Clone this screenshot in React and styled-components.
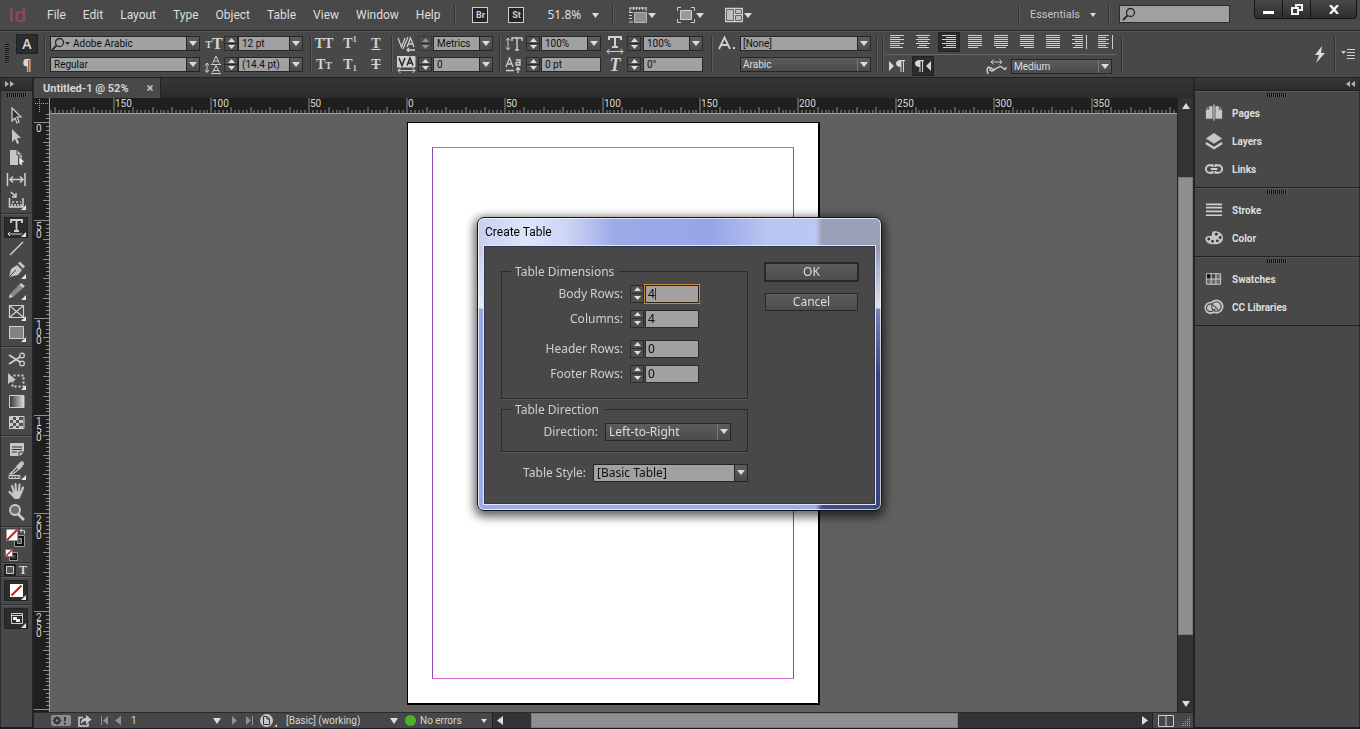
import React, { useState } from 'react';
import styled, { createGlobalStyle, css } from 'styled-components';

const GlobalStyle = createGlobalStyle`
    * {
        box-sizing: border-box;
    }
    body {
        margin: 0;
        background-color: #474747;
        color: #d6d6d6;
        font-family: Roboto, "Liberation Sans", sans-serif;
        font-size: 10px;
        overflow: hidden;
    }
    button, input, select {
        font: inherit;
        color: inherit;
        margin: 0;
        padding: 0;
        border: 0;
        border-radius: 0;
        background: none;
        outline: none;
    }
    svg {
        display: block;
        flex: none;
    }
`;

/* ---------- shared parts ---------- */

const Shell = styled.div`
    display: flex;
    flex-direction: column;
    height: 100vh;
    border-bottom: 2px solid #1d1c28;
`;

const Divider = styled.span`
    flex: none;
    width: 2px;
    height: ${({ $h }) => $h || 36}px;
    border-left: 1px solid #333;
    border-right: 1px solid #5c5c5c;
`;

const Spacer = styled.span`
    flex: 1;
`;

const darkButton = css`
    background-color: #2c2c2c;
    box-shadow: inset 0 0 0 1px #222;
`;

const Svg = ({ w = 18, h = 18, children, ...rest }) => (
    <svg width={w} height={h} viewBox={`0 0 ${w} ${h}`} fill="none" stroke="#cfcfcf" {...rest}>
        {children}
    </svg>
);

const Down = ({ w = 8, h = 5, fill = '#dcdcdc' }) => (
    <Svg w={w} h={h} stroke="none"><path d={`M0 0H${w}L${w / 2} ${h}Z`} fill={fill} /></Svg>
);

const Up = ({ w = 8, h = 5, fill = '#dcdcdc' }) => (
    <Svg w={w} h={h} stroke="none"><path d={`M0 ${h}H${w}L${w / 2} 0Z`} fill={fill} /></Svg>
);

const Side = ({ left, fill = '#dcdcdc', w = 6, h = 9 }) => (
    <Svg w={w} h={h} stroke="none">
        <path d={left ? `M${w} 0V${h}L0 ${h / 2}Z` : `M0 0V${h}L${w} ${h / 2}Z`} fill={fill} />
    </Svg>
);

const Corner = () => <path d="M20 15V20H15Z" fill="#e4e4e4" stroke="none" />;

/* ---------- menu bar ---------- */

const MenuBar = styled.header`
    display: flex;
    align-items: center;
    height: 31px;
    flex: none;
    background-color: #494949;
    border-bottom: 1px solid #252525;
`;

const Logo = styled.span`
    width: 38px;
    padding-left: 8px;
    color: #96406c;
    font: 600 20px/28px "Open Sans", sans-serif;
`;

const MenuNav = styled.nav`
    display: flex;
    gap: 17px;
    padding: 0 14px 0 9px;
`;

const MenuItem = styled.button`
    font-size: 12px;
    line-height: 16px;
    color: #dedede;
`;

const AppBadge = styled.button`
    width: 16px;
    height: 16px;
    margin-left: ${({ $gap }) => $gap}px;
    border: 1px solid #cfcfcf;
    background-color: #262626;
    color: #cfcfcf;
    font-size: 9px;
    line-height: 14px;
    font-weight: 700;
`;

const ZoomLevel = styled.button`
    display: flex;
    align-items: center;
    gap: 11px;
    margin: 0 13px 0 23px;
    font: 12px/16px "Noto Sans", sans-serif;
    color: #dedede;
`;

const ViewMenus = styled.div`
    display: flex;
    gap: 21px;
    padding-left: 15px;
`;

const ViewButton = styled.button`
    display: flex;
    align-items: center;
    gap: 1px;
`;

const WorkspaceButton = styled.button`
    display: flex;
    align-items: center;
    gap: 10px;
    padding: 0 12px 0 10px;
    font-size: 11px;
    line-height: 16px;
    color: #c4c4c4;
`;

const SearchBox = styled.label`
    display: flex;
    align-items: center;
    width: 111px;
    height: 18px;
    margin: 0 24px 3px 9px;
    padding-left: 2px;
    border: 1px solid #2b2b2b;
    background-color: #a0a0a0;

    input {
        min-width: 0;
        width: 90px;
        color: #111;
    }
`;

const WindowButtons = styled.div`
    display: flex;
    align-self: flex-start;
    height: 19px;
    margin-right: 3px;
    border: 1px solid #161616;
    border-top: 0;
    border-radius: 0 0 4px 4px;
    background: linear-gradient(#484848, #2e2e2e);
`;

const WindowButton = styled.button`
    display: flex;
    align-items: center;
    justify-content: center;
    width: ${({ $w }) => $w}px;

    &:not(:first-child) {
        border-left: 1px solid #161616;
    }
`;

const Lens = ({ dark = '#2b2b2b' }) => (
    <Svg w={14} h={14} stroke={dark}>
        <circle cx="8.5" cy="5.5" r="4" strokeWidth="1.3" />
        <path d="M5.5 8.5L1 13" strokeWidth="1.8" />
    </Svg>
);

const menus = ['File', 'Edit', 'Layout', 'Type', 'Object', 'Table', 'View', 'Window', 'Help'];

const TopMenu = () => (
    <MenuBar>
        <Logo>Id</Logo>
        <MenuNav>
            {menus.map(name => <MenuItem key={name}>{name}</MenuItem>)}
        </MenuNav>
        <Divider $h={21} />
        <AppBadge $gap={16}>Br</AppBadge>
        <AppBadge $gap={20}>St</AppBadge>
        <ZoomLevel>51.8% <Down w={7} /></ZoomLevel>
        <Divider $h={21} />
        <ViewMenus>
            <ViewButton aria-label="View options">
                <Svg w={18} h={16}>
                    <path d="M1 .5V5M4.5 0V3M7.5 0V3M10.5 0V3M13.5 0V3M17 0V4M0 5.5H4M0 8.5H3M0 11.5H3M0 15H4M0 1H18" />
                    <path d="M5.500 5.500H17.500V15.500H5.500Z" fill="#8f8f8f" stroke="#b5b5b5" />
                </Svg>
                <Down />
            </ViewButton>
            <ViewButton aria-label="Screen mode">
                <Svg w={18} h={16}>
                    <path d="M.5 4V.5H4M14 .5H17.500V4M17.500 12V15.500H14M4 15.500H.5V12" />
                    <path d="M3.500 3.500H14.500V12.500H3.500Z" fill="#999" />
                </Svg>
                <Down />
            </ViewButton>
            <ViewButton aria-label="Arrange documents">
                <Svg w={18} h={16}>
                    <path d="M.5 1.500H17.500V14.500H.5ZM9.500 1V15M9.500 7.500H18" strokeWidth="1.400" />
                    <path d="M2 3H8V13H2ZM11 3H16V6H11ZM11 9H16V13H11Z" fill="#bdbdbd" stroke="none" />
                </Svg>
                <Down />
            </ViewButton>
        </ViewMenus>
        <Spacer />
        <Divider $h={21} />
        <WorkspaceButton>Essentials <Down w={6} h={4} /></WorkspaceButton>
        <Divider $h={21} />
        <SearchBox><Lens /><input aria-label="Search" /></SearchBox>
        <WindowButtons>
            <WindowButton $w={27} aria-label="Minimize">
                <Svg w={11} h={12} stroke="none"><path d="M0 8H11V11H0Z" fill="#fff" /></Svg>
            </WindowButton>
            <WindowButton $w={28} aria-label="Restore">
                <Svg w={12} h={11} stroke="#f2f2f2" strokeWidth="2">
                    <path d="M5 1H11V6H5Z" />
                    <path d="M1 4H7V10H1Z" fill="#3a3a3a" />
                </Svg>
            </WindowButton>
            <WindowButton $w={46} aria-label="Close">
                <Svg w={10} h={9} stroke="#f5f5f5" strokeWidth="2.400"><path d="M1 0L9 9M9 0L1 9" /></Svg>
            </WindowButton>
        </WindowButtons>
    </MenuBar>
);

/* ---------- control bar ---------- */

const ControlBar = styled.div`
    display: flex;
    align-items: center;
    height: 47px;
    flex: none;
    padding-bottom: 1px;
    background-color: #484848;
    border-top: 1px solid #585858;
    border-bottom: 1px solid #222;
`;

const Grip = styled.span`
    flex: none;
    width: 4px;
    height: 20px;
    background: repeating-linear-gradient(#0c0c0c 0 1px, #5a5a5a 1px 2px);
`;

const Column = styled.div`
    display: flex;
    flex-direction: column;
    gap: 6px;
    padding: 0 ${({ $right = 0 }) => $right}px 0 ${({ $left = 0 }) => $left}px;
`;

const Row = styled.div`
    display: flex;
    align-items: center;
    height: 15px;
    gap: ${({ $gap = 1 }) => $gap}px;
`;

const ModeButton = styled.button`
    display: flex;
    align-items: center;
    justify-content: center;
    width: 22px;
    height: 20px;
    margin: -3px 0;
    color: #d8d8d8;
    font: 600 14px/18px "Open Sans", sans-serif;
    ${({ $active }) => $active && darkButton}
`;

const Combo = styled.div`
    display: flex;
    align-items: center;
    width: ${({ $w }) => $w}px;
    height: 15px;
    border: 1px solid #262626;
    background-color: #a1a1a1;
    color: #101010;

    input {
        flex: 1;
        min-width: 0;
        height: 13px;
        padding-left: 3px;
    }
`;

const ComboArrow = styled.button`
    display: flex;
    align-items: center;
    justify-content: center;
    width: 13px;
    align-self: stretch;
    border-left: 1px solid #262626;
    background: linear-gradient(#5e5e5e, #4a4a4a);
`;

const SpinBox = styled.span`
    flex: none;
    display: flex;
    flex-direction: column;
    width: 14px;
    height: ${({ $h }) => $h}px;
    border: 1px solid #2b2b2b;
    background-color: #4f4f4f;
    opacity: ${({ $dim }) => ($dim ? 0.5 : 1)};

    button {
        flex: 1;
        display: flex;
        align-items: center;
        justify-content: center;
    }
    button + button {
        border-top: 1px solid #2b2b2b;
    }
`;

const Spinner = ({ h = 15, dim, onStep }) => (
    <SpinBox $h={h} $dim={dim}>
        <button type="button" aria-label="Increase" onClick={() => onStep && onStep(1)}><Up w={7} h={4} /></button>
        <button type="button" aria-label="Decrease" onClick={() => onStep && onStep(-1)}><Down w={7} h={4} /></button>
    </SpinBox>
);

const SelectWrap = styled.div`
    position: relative;
    display: flex;
    width: ${({ $w }) => $w}px;
    height: ${({ $h = 15 }) => $h}px;
    border: 1px solid #262626;
    background: ${({ $light }) => ($light ? '#a1a1a1' : 'linear-gradient(#5c5c5c, #4b4b4b)')};
    color: ${({ $light }) => ($light ? '#101010' : '#dcdcdc')};

    select {
        flex: 1;
        appearance: none;
        padding: 0 16px 0 ${({ $h }) => ($h ? 3 : 2)}px;
    }
`;

const SelectArrow = styled.span`
    position: absolute;
    top: 0;
    right: 0;
    bottom: 0;
    display: flex;
    align-items: center;
    justify-content: center;
    width: 13px;
    pointer-events: none;
    border-left: 1px solid ${({ $light }) => ($light ? '#262626' : '#777')};
    background: ${({ $light }) => ($light ? 'linear-gradient(#5e5e5e, #4a4a4a)' : 'none')};
`;

const Select = ({ w, h, light, value, id, label }) => (
    <SelectWrap $w={w} $h={h} $light={light}>
        <select id={id} aria-label={label} defaultValue={value}><option>{value}</option></select>
        <SelectArrow $light={light}><Down /></SelectArrow>
    </SelectWrap>
);

const Field = ({ w, value, label, arrow = true, icon }) => (
    <Combo $w={w}>
        {icon}
        <input aria-label={label} defaultValue={value} />
        {arrow && <ComboArrow aria-label={`${label} list`}><Down /></ComboArrow>}
    </Combo>
);

const Glyph = styled.button`
    display: flex;
    align-items: center;
    justify-content: center;
    width: 20px;
    height: 16px;
    color: #d2d2d2;
    font: ${({ $size = 14 }) => $size}px/16px "Liberation Serif", serif;
    font-weight: 700;
    font-style: ${({ $italic }) => ($italic ? 'italic' : 'normal')};
    text-decoration: ${({ $line }) => $line || 'none'};

    sup, sub {
        font-size: 8px;
        line-height: 8px;
    }
    sup {
        align-self: flex-start;
    }
    sub {
        align-self: flex-end;
    }
    small {
        font-size: 10px;
        padding-top: 3px;
    }
`;

const AlignPanel = styled.div`
    padding: 0 5px 0 2px;
`;

const AlignRow = styled.div`
    display: flex;
    align-items: center;
    height: 20px;
    gap: 4px;

    & + & {
        margin-top: 2px;
        padding-top: 1px;
        height: 22px;
        border-top: 1px solid #666;
    }
`;

const AlignButton = styled.button`
    display: flex;
    align-items: center;
    justify-content: center;
    width: 22px;
    height: 20px;
    ${({ $active }) => $active && darkButton}
`;

const aligns = [
    { name: 'Align left', lines: [[0, 14], [0, 10], [0, 14], [0, 10], [0, 14], [0, 10], [0, 13]] },
    { name: 'Align center', lines: [[0, 14], [2, 12], [0, 14], [2, 12], [0, 14], [3, 11], [1, 13]] },
    { name: 'Align right', lines: [[0, 14], [4, 14], [0, 14], [4, 14], [0, 14], [4, 14], [1, 14]], active: true },
    { name: 'Justify left', lines: [[0, 14], [0, 14], [0, 14], [0, 14], [0, 14], [0, 14], [0, 10]] },
    { name: 'Justify center', lines: [[0, 14], [0, 14], [0, 14], [0, 14], [0, 14], [0, 14], [2, 12]] },
    { name: 'Justify right', lines: [[0, 14], [0, 14], [0, 14], [0, 14], [0, 14], [0, 14], [4, 14]] },
    { name: 'Justify all', lines: [[0, 14], [0, 14], [0, 14], [0, 14], [0, 14], [0, 14], [0, 14]] },
    { name: 'Align towards spine', lines: [[0, 11], [3, 11], [0, 11], [3, 11], [0, 11], [3, 11], [1, 11]], bar: true },
    { name: 'Align away from spine', lines: [[0, 11], [0, 8], [0, 11], [0, 8], [0, 11], [0, 8], [0, 10]], bar: true },
];

const AlignIcon = ({ lines, bar }) => (
    <Svg w={15} h={14}>
        {lines.map(([from, to], i) => <path key={i} d={`M${from} ${i * 2 + 0.5}H${to}`} />)}
        {bar && <path d="M14.500 0V14" />}
    </Svg>
);

const Pilcrow = ({ flip }) => (
    <Svg w={18} h={12} stroke="none" fill="#d6d6d6">
        <path d={flip ? 'M17 1V11L12 6Z' : 'M1 1V11L6 6Z'} />
        <path
            transform={flip ? 'translate(-7 0)' : undefined}
            d="M17 0V1.200H16V12H15V1.200H13.500V12H12.500V7C10 7 8 5.800 8 3.500S10 0 12.500 0Z"
        />
    </Svg>
);

const ControlStrip = () => (
    <ControlBar>
        <Column $left={5} $right={7}><Grip /></Column>
        <Column>
            <Row><ModeButton $active aria-label="Character">A</ModeButton></Row>
            <Row><ModeButton aria-label="Paragraph">¶</ModeButton></Row>
        </Column>
        <Column $left={6}><Divider /></Column>
        <Column $left={4} $right={4}>
            <Field
                w={150}
                value="Adobe Arabic"
                label="Font"
                icon={<><Lens /><Down w={5} h={3} fill="#2b2b2b" /></>}
            />
            <Field w={150} value="Regular" label="Font style" />
        </Column>
        <Column $right={7}>
            <Row $gap={0}>
                <Glyph as="span" $size={16}><small>T</small>T</Glyph>
                <Spinner /><Field w={65} value="12 pt" label="Font size" />
            </Row>
            <Row $gap={0}>
                <Svg w={20} h={20}>
                    <path d="M3 8V17M1 10.500L3 8L5 10.500M1 15L3 17.500L5 15M7 9.500H17M7 18.500H17" />
                    <path d="M8.500 8.500L12 1L15.500 8.500M10 6H14M8.500 17.500L12 10.500L15.500 17.500M10 15.500H14" />
                </Svg>
                <Spinner /><Field w={65} value="(14.4 pt)" label="Leading" />
            </Row>
        </Column>
        <Divider />
        <Column $left={2} $right={5}>
            <Row $gap={6}>
                <Glyph>TT</Glyph>
                <Glyph>T<sup>1</sup></Glyph>
                <Glyph $line="underline">T</Glyph>
            </Row>
            <Row $gap={6}>
                <Glyph>T<small>T</small></Glyph>
                <Glyph>T<sub>1</sub></Glyph>
                <Glyph $line="line-through">T</Glyph>
            </Row>
        </Column>
        <Divider />
        <Column $left={4} $right={6}>
            <Row>
                <Svg w={20} h={16} strokeWidth="1.300">
                    <path d="M1 2L4.500 11L8 2M10 11L13.500 2L17 11M11 8H16M11 1L6 13M18 14H10M12 12L10 14L12 16" />
                </Svg>
                <Spinner dim /><Field w={60} value="Metrics" label="Kerning" />
            </Row>
            <Row>
                <Svg w={20} h={18}>
                    <path d="M0 .5H18V11H0Z" fill="#cfcfcf" />
                    <path d="M2 2L5 9.500L8 2M10 9.500L13 2L16 9.500M11 7H15" stroke="#222" strokeWidth="1.400" />
                    <path d="M1 14.500H18M3.500 12L1 14.500L3.500 17M15.500 12L18 14.500L15.500 17" />
                </Svg>
                <Spinner /><Field w={60} value="0" label="Tracking" />
            </Row>
        </Column>
        <Divider />
        <Column $left={4} $right={4}>
            <Row>
                <Svg w={20} h={16}>
                    <path d="M3 2V14M1 4.500L3 2L5 4.500M1 11.500L3 14L5 11.500" />
                    <path d="M7 5V2H17V5M12 2V14M10 14H14" strokeWidth="1.400" />
                </Svg>
                <Spinner /><Field w={60} value="100%" label="Vertical scale" />
            </Row>
            <Row>
                <Svg w={20} h={16} strokeWidth="1.300">
                    <path d="M1 10L4.500 1L8 10M2 7H7M1 13.500H9M11 3H15V8H11V5.500H15M13 10.500V16M11 13L13 10.500L15 13" />
                </Svg>
                <Spinner /><Field w={60} value="0 pt" label="Baseline shift" arrow={false} />
            </Row>
        </Column>
        <Column $right={8}>
            <Row $gap={2}>
                <Svg w={20} h={20}>
                    <path d="M4 6V3H16V6M10 3V13M7 13H13" strokeWidth="2" />
                    <path d="M2 17.500H18M4.500 15L2 17.500L4.500 20M15.500 15L18 17.500L15.500 20" />
                </Svg>
                <Spinner /><Field w={60} value="100%" label="Horizontal scale" />
            </Row>
            <Row $gap={2}>
                <Glyph as="span" $size={18} $italic>T</Glyph>
                <Spinner /><Field w={60} value="0°" label="Skew" arrow={false} />
            </Row>
        </Column>
        <Divider />
        <Column $left={4} $right={5}>
            <Row $gap={3}>
                <Svg w={20} h={15} strokeWidth="1.800">
                    <path d="M2 13L7.500 1.500L13 13M4 9H11" />
                    <path d="M16 11H18V13H16Z" fill="#cfcfcf" stroke="none" />
                </Svg>
                <Select w={131} light value="[None]" label="Character style" />
            </Row>
            <Row $gap={3}>
                <Svg w={20} h={15} />
                <Select w={131} value="Arabic" label="Language" />
            </Row>
        </Column>
        <Divider /><Column $left={4}><Divider /></Column>
        <AlignPanel>
            <AlignRow>
                {aligns.map(item => (
                    <AlignButton key={item.name} aria-label={item.name} $active={item.active}>
                        <AlignIcon {...item} />
                    </AlignButton>
                ))}
            </AlignRow>
            <AlignRow>
                <AlignButton aria-label="Left to right"><Pilcrow /></AlignButton>
                <AlignButton aria-label="Right to left" $active><Pilcrow flip /></AlignButton>
                <Svg w={69} h={16} viewBox="-47 0 69 16" strokeWidth="1.500">
                    <path d="M3 16C1 10 3 8 6 10S9 12 12 10S16 8 18 10S21 12 21 9M6 10C3 13 8 14 10 11" />
                    <path d="M6 4H17M8.500 1.500L6 4L8.500 6.500M14.500 1.500L17 4L14.500 6.500" strokeWidth="1" />
                </Svg>
                <Select w={101} value="Medium" label="Kashida width" />
            </AlignRow>
        </AlignPanel>
        <Divider />
        <Spacer />
        <Column $right={3}>
            <ModeButton aria-label="Quick apply">
                <Svg w={12} h={17} stroke="none"><path d="M8 0L1 9L5 9L2 17L11 7L7 7Z" fill="#dcdcdc" /></Svg>
            </ModeButton>
        </Column>
        <Divider />
        <Column $left={5} $right={4}>
            <Svg w={15} h={10}>
                <path d="M6 .5H14M6 3.500H14M6 6.500H14M6 9.500H14" />
                <path d="M0 2H5L2.500 5Z" fill="#cfcfcf" stroke="none" />
            </Svg>
        </Column>
    </ControlBar>
);

/* ---------- tools ---------- */

const Workspace = styled.div`
    display: flex;
    flex: 1;
    min-height: 0;
`;

const ToolDock = styled.aside`
    flex: none;
    width: 34px;
    border-left: 1px solid #2a2a2a;
    border-right: 2px solid #242424;
    background-color: #484848;
`;

const DockHeader = styled.div`
    display: flex;
    align-items: center;
    justify-content: ${({ $end }) => ($end ? 'flex-end' : 'flex-start')};
    gap: 1px;
    height: 13px;
    padding: 0 4px;
    background: linear-gradient(#383838, #2c2c2c);
    border-bottom: 1px solid #222;
`;

const DockGrip = styled.div`
    width: 20px;
    height: 4px;
    margin: 2px auto ${({ $after }) => $after}px;
    background: repeating-linear-gradient(90deg, #0c0c0c 0 1px, #5a5a5a 1px 2px);
`;

const ToolGroup = styled.div`
    display: flex;
    flex-direction: column;
    align-items: center;
    margin-right: 1px;
    padding: ${({ $pad = 2 }) => $pad}px 0;
    border-top: 1px solid ${({ $first }) => ($first ? 'transparent' : '#2e2e2e')};
    box-shadow: ${({ $first }) => ($first ? 'none' : 'inset 0 1px #5c5c5c')};
`;

const Tool = styled.button`
    display: flex;
    align-items: center;
    justify-content: center;
    width: 24px;
    height: 21px;
    ${({ $active }) => $active && darkButton}
`;

const MiniRow = styled.div`
    display: flex;
    align-items: center;
    gap: 3px;
    width: 24px;
    height: ${({ $h }) => $h}px;
    font: 700 12px/12px "Liberation Serif", serif;
`;

const light = { fill: '#c6c6c6', stroke: 'none' };

const toolGroups = [
    [
        { name: 'Selection', icon: <path d="M6 2L15 11H11L13 16L11 17L9 12L6 15Z" fill="#333" strokeWidth="1.200" /> },
        { name: 'Direct selection', icon: <path d="M6 2L15 11H11L13 16L11 17L9 12L6 15Z" {...light} /> },
        { name: 'Page', icon: <><path d="M4 2H11L16 7V10L12 8V17H4Z" {...light} /><path d="M11 2V7H16" stroke="#444" /><path d="M13 8L19 14.500H16L17 18L13 16Z" fill="#eee" stroke="#444" strokeWidth=".7" /></> },
        { name: 'Gap', icon: <path d="M1.500 4V17M19 4V17M4 10.500H17M7 7.500L4 10.500L7 13.500M14 7.500L17 10.500L14 13.500" strokeWidth="1.500" /> },
        { name: 'Content collector', corner: true, icon: <path d="M3.500 8V17H17V8M6 17V14M9 17V14M12 17V14M15 17V14M6 12H8M10 12H12M14 12H15M5 2L10 7M10 3V7H6" strokeWidth="1.500" /> },
    ],
    [
        { name: 'Type', active: true, corner: true, icon: <><path d="M5 6V3H16V6M10.500 3V14M8 14H13" strokeWidth="1.800" /><path d="M2 17H16M4 15L2 17L4 19" /></> },
        { name: 'Line', icon: <path d="M4 17L17 4" strokeWidth="1.400" /> },
        { name: 'Pen', corner: true, icon: <><path d="M3 18L5 10L11 6L16 11L12 16Z" {...light} /><path d="M12 4.500L14 2.500L19 7.500L17 9.500Z" {...light} /><path d="M3 18L10 11" stroke="#444" /></> },
        { name: 'Pencil', corner: true, icon: <><path d="M3 18L4 14L13 5L17 8L7 17Z" fill="#8b8b8b" stroke="none" /><path d="M3 18L4 14L7 17ZM13 5L15 3L19 6L17 8Z" {...light} /></> },
        { name: 'Rectangle frame', corner: true, icon: <path d="M3.500 4.500H17.500V16.500H3.500ZM4 5L17 16M17 5L4 16" strokeWidth="1.200" /> },
        { name: 'Rectangle', corner: true, icon: <path d="M3.500 4.500H17.500V16.500H3.500Z" fill="#838383" /> },
    ],
    [
        { name: 'Scissors', icon: <><path d="M3 6L14 13M3 15L14 8" strokeWidth="1.800" /><circle cx="16" cy="6.500" r="2.300" strokeWidth="1.300" /><circle cx="16" cy="14.500" r="2.300" strokeWidth="1.300" /></> },
        { name: 'Free transform', corner: true, icon: <><path d="M7.500 5.500H17.500V16.500H6.500V10" strokeDasharray="2 2" strokeWidth="2" /><path d="M2 3L10 10L6 11L2 14Z" {...light} /></> },
        { name: 'Gradient swatch', icon: <><defs><linearGradient id="toolGrad"><stop stopColor="#333" /><stop offset="1" stopColor="#ddd" /></linearGradient></defs><path d="M3.500 4.500H18V16.500H3.500Z" fill="url(#toolGrad)" /></> },
        { name: 'Gradient feather', icon: <><path d="M3.500 4.500H18V16.500H3.500Z" fill="#555" /><path d="M4 5H7V8H4ZM10 5H13V8H10ZM7 8H10V11H7ZM13 8H17V11H13ZM4 11H7V14H4ZM10 11H13V14H10ZM7 14H10V16H7ZM13 14H17V16H13Z" fill="#c9c9c9" stroke="none" /></> },
    ],
    [
        { name: 'Note', icon: <><path d="M4 4H18V13L14 17H4Z" {...light} /><path d="M6 8H16M6 10.500H16M6 13H11M13 17V13H18" stroke="#333" /></> },
        { name: 'Eyedropper', corner: true, icon: <><path d="M4 14L11 7L13 9L7 14Z" strokeWidth="1.200" /><path d="M10 6L12 4.500L14 2L17 1L18 4L16 7L14 9.500Z" {...light} /><path d="M3 15.500H14V18.500H3ZM6 15V18M9 15V18M12 15V18" /></> },
        {
            name: 'Hand',
            icon: (
                <>
                    <path d="M6 5L8 11M9.500 3L10 10M13.500 3.500L13 10M17 6.500L15 12M3.500 11L7.500 15" stroke="#c6c6c6" strokeWidth="2.200" strokeLinecap="round" />
                    <path d="M7 10H16L15 15L13 18H8.500L5.500 14Z" {...light} />
                </>
            ),
        },
        { name: 'Zoom', icon: <><path d="M12 12L18 18" strokeWidth="2.500" /><circle cx="9" cy="8" r="5" fill="#6f6f6f" strokeWidth="1.800" /></> },
    ],
];

const groupPads = [2, 3, 2, 3];

const Tools = () => (
    <ToolDock>
        <DockHeader><Side w={4} h={6} fill="#b5b5b5" /><Side w={4} h={6} fill="#b5b5b5" /></DockHeader>
        <DockGrip $after={6} />
        {toolGroups.map((group, i) => (
            <ToolGroup key={i} $first={i === 0} $pad={groupPads[i]}>
                {group.map(tool => (
                    <Tool key={tool.name} aria-label={tool.name} $active={tool.active}>
                        <Svg w={21} h={21}>{tool.icon}{tool.corner && <Corner />}</Svg>
                    </Tool>
                ))}
            </ToolGroup>
        ))}
        <ToolGroup $pad={1}>
            <MiniRow $h={20}>
                <Svg w={24} h={20}>
                    <path d="M12.500 9.500H18.500V16.500H12.500Z" stroke="#111" strokeWidth="3" />
                    <path d="M10.500 7.500H20.500V18.500H10.500Z" stroke="#999" />
                    <path d="M13.500 10.500H17.500V15.500H13.500Z" fill="#555" stroke="#999" />
                    <path d="M2 1H14V13H2Z" fill="#fff" stroke="#444" />
                    <path d="M3 12L13 2" stroke="#d01818" strokeWidth="2" />
                    <path d="M16 2.500H20.500V6M18 .5L16 2.500L18 4.500" />
                </Svg>
            </MiniRow>
            <MiniRow $h={13}>
                <Svg w={16} h={12}>
                    <path d="M6.500 4.500H12.500V10.500H6.500Z" stroke="#111" strokeWidth="2" />
                    <path d="M5.500 3.500H13.500V11.500H5.500Z" stroke="#999" />
                    <path d="M1.500 .5H8.500V7.500H1.500Z" fill="#fff" stroke="#777" />
                    <path d="M2 7L8 1" stroke="#d01818" strokeWidth="1.500" />
                </Svg>
            </MiniRow>
        </ToolGroup>
        <ToolGroup $pad={0}>
            <MiniRow $h={13}>
                <Svg w={12} h={12}><rect width="12" height="12" fill="#222" stroke="none" /><path d="M2.500 2.500H9.500V9.500H2.500Z" fill="#555" /></Svg>
                <span>T</span>
            </MiniRow>
        </ToolGroup>
        <ToolGroup $pad={3}>
            <Tool $active aria-label="Apply none">
                <Svg w={21} h={21}>
                    <path d="M4 4H17V17H4Z" fill="#fff" stroke="none" />
                    <path d="M5.500 15.500L15.500 5.500" stroke="#d01818" strokeWidth="2" />
                    <Corner />
                </Svg>
            </Tool>
        </ToolGroup>
        <ToolGroup $pad={3}>
            <Tool $active aria-label="View mode">
                <Svg w={21} h={21}>
                    <path d="M5.500 5.500H16.500V15.500H5.500ZM5 7.500H17" />
                    <path d="M7 9H11V11H14V14H10V12H7Z" fill="#eee" stroke="none" />
                    <Corner />
                </Svg>
            </Tool>
        </ToolGroup>
    </ToolDock>
);

/* ---------- document ---------- */

const DocArea = styled.main`
    display: flex;
    flex-direction: column;
    flex: 1;
    min-width: 0;
`;

const TabBar = styled.div`
    display: flex;
    flex: none;
    height: 20px;
    background: linear-gradient(#363636, #2c2c2c);
`;

const Tab = styled.button`
    display: flex;
    align-items: center;
    gap: 18px;
    padding: 0 7px 0 9px;
    border-right: 1px solid #222;
    background-color: #494949;
    font-size: 11px;
    font-weight: 700;
`;

const DocGrid = styled.div`
    display: grid;
    grid-template: 16px minmax(0, 1fr) / 16px minmax(0, 1fr) 16px;
    flex: 1;
    min-height: 0;
    background-color: #1f1f1f;
`;

const RulerBox = styled.div`
    overflow: hidden;
    background-color: #1f1f1f;
    border-bottom: ${({ $vertical }) => ($vertical ? '0' : '1px solid #a0a0a0')};
    border-right: ${({ $vertical }) => ($vertical ? '1px solid #a0a0a0' : '0')};

    text {
        font-size: 10px;
        fill: #d9d9c8;
        stroke: none;
    }
`;

const Pasteboard = styled.div`
    display: flex;
    align-items: center;
    justify-content: center;
    overflow: hidden;
    background-color: #606060;
`;

const Page = styled.div`
    flex: none;
    width: 413px;
    height: 583px;
    padding: 24px;
    border: 1px solid #000;
    border-width: 1px 2px 2px 1px;
    background-color: #fff;
`;

const Margins = styled.div`
    height: 100%;
    border: 1px solid #8b45b5;
    border-top-color: #c765c9;
    border-bottom-color: #d064d0;
`;

// width of 50 mm at this zoom
const STEP = 97.8;

const marks = [];
for (let mm = -400; mm <= 800; mm += 2) {
    marks.push(mm);
}
const tickSize = mm => (mm % 50 === 0 ? 15 : mm % 10 === 0 ? 6 : 3);
const at = mm => Math.round((mm * STEP) / 50) + 0.5;

const acrossLabels = [-150, -100, -50, 0, 50, 100, 150, 200, 250, 300, 350];
const downLabels = [0, 50, 100, 150, 200, 250];

const HorizontalRuler = () => (
    <RulerBox>
        <svg width="100%" height="15" stroke="#8f8f8f">
            <svg x="50%" overflow="visible">
                <g transform="translate(-207 0)">
                    {marks.map(mm => <path key={mm} d={`M${at(mm)} 15V${15 - tickSize(mm)}`} />)}
                    {acrossLabels.map(mm => (
                        <text key={mm} x={at(mm) + 1} y="9">{Math.abs(mm)}</text>
                    ))}
                </g>
            </svg>
        </svg>
    </RulerBox>
);

const VerticalRuler = () => (
    <RulerBox $vertical>
        <svg width="15" height="100%" stroke="#8f8f8f">
            <svg y="50%" overflow="visible">
                <g transform="translate(0 -291)">
                    {marks.map(mm => <path key={mm} d={`M15 ${at(mm)}H${15 - tickSize(mm)}`} />)}
                    {downLabels.map(mm => (
                        String(mm).split('').map((digit, i) => (
                            <text key={`${mm}-${i}`} x="2" y={at(mm) + 9 + i * 8}>{digit}</text>
                        ))
                    ))}
                </g>
            </svg>
        </svg>
    </RulerBox>
);

const VScroll = styled.div`
    grid-column: 3;
    grid-row: 1 / 3;
    display: flex;
    flex-direction: column;
    align-items: center;
    padding: 5px 0;
    border-left: 1px solid #222;
    background-color: #333;
`;

const Track = styled.span`
    flex: ${({ $size }) => $size};
`;

const Thumb = styled.span`
    flex: ${({ $size }) => $size};
    align-self: stretch;
    border: 1px solid #7a7a7a;
    background-color: #8e8e8e;
`;

const StatusBar = styled.footer`
    display: flex;
    align-items: center;
    flex: none;
    height: 16px;
    padding-left: 17px;
    background-color: #474747;
    border-top: 1px solid #2a2a2a;
    margin-bottom: -1px;
`;

const StatusItem = styled.button`
    display: flex;
    align-items: center;
    justify-content: ${({ $split }) => ($split ? 'space-between' : 'flex-start')};
    flex: none;
    gap: 4px;
    width: ${({ $w }) => $w}px;
    white-space: nowrap;
`;

const HScroll = styled.div`
    display: flex;
    align-items: center;
    flex: 1;
    align-self: stretch;
    padding: 0 4px;
    border-left: 1px solid #222;
    border-right: 1px solid #222;
    background-color: #333;
`;

const StatusEnd = styled.div`
    display: flex;
    gap: 6px;
    padding: 0 2px 0 5px;
`;

const Light = styled.span`
    width: 11px;
    height: 11px;
    border-radius: 50%;
    background-color: #4fb02c;
`;

const Status = () => (
    <StatusBar>
        <StatusItem $w={27} aria-label="Preflight">
            <Svg w={20} h={11} stroke="none">
                <rect width="20" height="11" rx="2" fill="#8d8d8d" />
                <circle cx="6" cy="5.500" r="2.500" stroke="#333" strokeWidth="2" />
                <path d="M6 1V10M1.500 5.500H10.500M3 2.500L9 8.500M9 2.500L3 8.500" stroke="#333" />
                <circle cx="6" cy="5.500" r="1.300" fill="#8d8d8d" />
                <path d="M13 2H15V6H13ZM13 7.500H15V9.500H13Z" fill="#333" />
            </Svg>
        </StatusItem>
        <StatusItem $w={23} aria-label="Share">
            <Svg w={14} h={12}>
                <path d="M5 2.500H1V11H10V8" strokeWidth="1.500" />
                <path d="M3 9C3 5 5 3 8 3V0L13.500 4.500L8 9V6C6 6 4 7 3 9Z" {...light} />
            </Svg>
        </StatusItem>
        <StatusItem $w={14} aria-label="First page"><Svg w={8} h={9}><path d="M.5 0V9" stroke="#909090" /><path d="M7 0V9L2 4.500Z" fill="#909090" stroke="none" /></Svg></StatusItem>
        <StatusItem $w={16} aria-label="Previous page"><Side left fill="#909090" /></StatusItem>
        <StatusItem $w={90} $split>1 <Down w={8} h={6} /></StatusItem>
        <StatusItem $w={24} aria-label="Next page"><Svg w={17} h={9} stroke="none"><path d="M11 0V9L16 4.500Z" fill="#909090" /></Svg></StatusItem>
        <StatusItem $w={15} aria-label="Last page"><Svg w={8} h={9}><path d="M7.500 0V9" stroke="#909090" /><path d="M1 0V9L6 4.500Z" fill="#909090" stroke="none" /></Svg></StatusItem>
        <StatusItem $w={26} aria-label="Document">
            <Svg w={17} h={13}>
                <circle cx="6.500" cy="6.500" r="6.500" {...light} />
                <path d="M3.500 2.500H7L9.500 5V10.500H3.500ZM7 2.500V5H9.500" stroke="#333" />
                <path d="M14 13H17V10Z" {...light} />
            </Svg>
        </StatusItem>
        <StatusItem $w={112} $split>[Basic] (working) <Down w={8} h={6} /></StatusItem>
        <StatusItem $w={89} $split>
            <StatusItem as="span" $w={64}><Svg w={3} h={1} /><Light />No errors</StatusItem>
            <Down w={6} h={4} />
        </StatusItem>
        <Svg w={5} h={1} />
        <HScroll>
            <Side left />
            <Track $size={28} />
            <Thumb $size={427} />
            <Track $size={185} />
            <Side />
        </HScroll>
        <StatusEnd>
            <Svg w={16} h={12}><path d="M.5 .5H15.500V11.500H.5ZM8 0V12" /></Svg>
            <Svg w={11} h={12} stroke="#aaa" strokeDasharray="1 1">
                <path d="M9 2.500H11M7 4.500H11M5 6.500H11M3 8.500H11M1 10.500H11" />
            </Svg>
        </StatusEnd>
    </StatusBar>
);

const Document = () => (
    <DocArea>
        <TabBar>
            <Tab>
                Untitled-1 @ 52%
                <Svg w={6} h={6} strokeWidth="1.500"><path d="M.5 .5L5.500 5.500M5.500 .5L.5 5.500" /></Svg>
            </Tab>
        </TabBar>
        <DocGrid>
            <RulerBox $vertical>
                <Svg w={15} h={16} stroke="#aaa" strokeDasharray="1 1"><path d="M5.500 1V15M1 5.500H15" /></Svg>
            </RulerBox>
            <HorizontalRuler />
            <VScroll>
                <Up w={8} h={6} />
                <Track $size={68} />
                <Thumb $size={457} />
                <Track $size={66} />
                <Down w={8} h={6} />
            </VScroll>
            <VerticalRuler />
            <Pasteboard>
                <Page><Margins /></Page>
            </Pasteboard>
        </DocGrid>
        <Status />
    </DocArea>
);

/* ---------- right panels ---------- */

const PanelDock = styled.aside`
    flex: none;
    width: 167px;
    border-left: 2px solid #242424;
    border-right: 1px solid #2a2a2a;
    background-color: #484848;
`;

const PanelGroup = styled.div`
    overflow: hidden;
    padding-bottom: 4px;
    border-bottom: 1px solid #222;
    box-shadow: inset 0 1px #565656;
`;

const PanelButton = styled.button`
    display: flex;
    align-items: center;
    gap: 8px;
    width: 100%;
    height: 28px;
    padding-left: 9px;
    font-weight: 700;
    color: #dedede;
`;

const panelGroups = [
    [
        { name: 'Pages', icon: <><path d="M2 6L5 3H9V16H2ZM19 6L16 3H12V16H19Z" {...light} /><path d="M10.500 1V18" stroke="#eee" /><path d="M2 6H5V3M19 6H16V3" stroke="#444" /></> },
        { name: 'Layers', icon: <><path d="M10.500 1.500L19 7.500L10.500 13L2 7.500Z" {...light} /><path d="M2 12L10.500 17.500L19 12" strokeWidth="2.500" /></> },
        { name: 'Links', icon: <path d="M9 8V6H6A4 4 0 0 0 6 14H9V12M12 8V6H15A4 4 0 0 1 15 14H12V12M7 10H14" strokeWidth="2" /> },
    ],
    [
        { name: 'Stroke', icon: <path d="M2 4H19M2 7.500H19M2 11.500H19M2 15.500H19" strokeWidth="1.800" /> },
        { name: 'Color', icon: <><path d="M10 3C14 2 20 5 20 10S15 17 10 16.500C5 17 1 14 1.500 10C2 8 5 8 7 8C10 8 7 4 10 3Z" {...light} /><g fill="#333" stroke="none"><circle cx="5" cy="11" r="1.500" /><circle cx="9" cy="13.500" r="1.500" /><circle cx="14" cy="13" r="1.500" /><circle cx="17" cy="9.500" r="1.500" /><circle cx="13" cy="6" r="1.500" /></g></> },
    ],
    [
        { name: 'Swatches', icon: <><path d="M2.500 4.500H17.500V15.500H2.500Z" fill="#6a6a6a" /><path d="M3 5H7V10H3Z" fill="#111" stroke="none" /><path d="M8 5H12V10H8Z" fill="#444" stroke="none" /><path d="M7.500 4V16M12.500 4V16M2 10H18" /></> },
        {
            name: 'CC Libraries',
            icon: (
                <>
                    <circle cx="13" cy="9.500" r="7.500" {...light} />
                    <circle cx="7" cy="11" r="6.500" {...light} />
                    <circle cx="13" cy="9.500" r="5" stroke="#484848" strokeWidth="1.200" />
                    <path d="M15 13L9 7.500C6 5.500 2.500 8 2.500 11S6 15.500 9 14.500L12 12" stroke="#484848" strokeWidth="1.200" />
                </>
            ),
        },
    ],
];

const Panels = () => (
    <PanelDock>
        <DockHeader $end><Side left w={4} h={6} fill="#b5b5b5" /><Side left w={4} h={6} fill="#b5b5b5" /></DockHeader>
        {panelGroups.map((group, i) => (
            <PanelGroup key={i}>
                <DockGrip $after={2} />
                {group.map(panel => (
                    <PanelButton key={panel.name}>
                        <Svg w={20} h={20} viewBox="0 0 21 20">{panel.icon}</Svg>
                        {panel.name}
                    </PanelButton>
                ))}
            </PanelGroup>
        ))}
    </PanelDock>
);

/* ---------- create table dialog ---------- */

const Overlay = styled.div`
    position: fixed;
    inset: 0;
    display: flex;
    align-items: center;
    justify-content: center;
    padding: 0 1px 2px 0;
    z-index: 10;
`;

const Modal = styled.section`
    width: 405px;
    padding: 0 5px 5px;
    border: 1px solid #14161f;
    border-radius: 7px;
    background:
        linear-gradient(90deg, transparent 338px, #9aa0b8 344px) 0 0 / 100% 28px no-repeat,
        linear-gradient(90deg, #c9d0ee, #dfe4fb 12%, #ccd5f6 22%, #9daae8 34%, #97a5e6 58%, #b9c5f2 72%, #bfcaf3) 0 0 / 100% 28px no-repeat,
        linear-gradient(#c5cdec, #e6e9f6 62px, #98a6e3 63px, #9dabe6) 0 28px / 8px 100% no-repeat,
        linear-gradient(#9298b2, #dfe2ec 62px, #7883b4 63px, #38457c 130px) 100% 28px / 8px 100% no-repeat,
        linear-gradient(90deg, #9dabe6 338px, #43507f 344px);
    box-shadow: inset 0 0 0 1px rgba(255, 255, 255, .7), 0 3px 10px 3px rgba(0, 0, 0, .6);
    font: 12px/16px "Noto Sans", sans-serif;
    color: #cfcfcf;
`;

const ModalTitle = styled.h1`
    margin: 0;
    padding: 6px 2px 5px;
    font: 12px/16px Roboto, sans-serif;
    color: #000;
`;

const ModalBody = styled.form`
    display: flex;
    gap: 16px;
    padding: 16px 16px 22px 17px;
    border: 1px solid #dfe6fa;
    outline: 1px solid rgba(40, 45, 80, .6);
    outline-offset: -2px;
    background-color: #484848;
`;

const ModalMain = styled.div`
    flex: 1;
    padding-top: 2px;
`;

const Group = styled.fieldset`
    min-width: 0;
    margin: 0 0 ${({ $after }) => $after}px;
    padding: 0 0 ${({ $bottom }) => $bottom}px;
    border: 1px solid #2a2a2a;
    box-shadow: 0 1px #565656;

    legend {
        margin-left: 9px;
        padding: 0 5px 0 4px;
        line-height: 16px;
    }
`;

const FormRow = styled.div`
    display: flex;
    align-items: center;
    height: 18px;
    margin-top: ${({ $top }) => $top}px;

    label {
        width: ${({ $label }) => $label}px;
        padding-right: 7px;
        text-align: right;
    }
`;

const NumberInput = styled.input`
    width: 54px;
    height: 18px;
    margin-left: 1px;
    padding: 0 2px;
    border: 1px solid #2a2a2a;
    background-color: #a1a1a1;
    color: #0c0c0c;
    ${({ $focused }) => $focused && css`
        border-color: #33200c;
        box-shadow: 0 0 0 1px #cf8b3c;
    `}
`;

const Caret = styled.span`
    width: 1px;
    height: 12px;
    margin-left: -44px;
    background-color: #333;
`;

const Actions = styled.div`
    display: flex;
    flex-direction: column;
    align-items: center;
    gap: 11px;
    width: 95px;
`;

const ModalButton = styled.button`
    width: ${({ $primary }) => ($primary ? 95 : 93)}px;
    height: ${({ $primary }) => ($primary ? 20 : 18)}px;
    border: ${({ $primary }) => ($primary ? 2 : 1)}px solid #282828;
    background: linear-gradient(#5c5c5c, #4c4c4c);
    line-height: 16px;
    color: #dcdcdc;
`;

const fields = [
    { id: 'bodyRows', label: 'Body Rows:', top: 5 },
    { id: 'columns', label: 'Columns:', top: 7 },
    { id: 'headerRows', label: 'Header Rows:', top: 12 },
    { id: 'footerRows', label: 'Footer Rows:', top: 7 },
];

const CreateTable = () => {
    const [values, setValues] = useState({ bodyRows: 4, columns: 4, headerRows: 0, footerRows: 0 });

    const step = (id, by) => setValues({ ...values, [id]: Math.max(0, Number(values[id]) + by) });

    return (
        <Overlay>
            <Modal role="dialog" aria-label="Create Table">
                <ModalTitle>Create Table</ModalTitle>
                <ModalBody onSubmit={e => e.preventDefault()}>
                    <ModalMain>
                        <Group $after={3} $bottom={15}>
                            <legend>Table Dimensions</legend>
                            {fields.map((field, i) => (
                                <FormRow key={field.id} $top={field.top} $label={128}>
                                    <label htmlFor={field.id}>{field.label}</label>
                                    <Spinner h={18} onStep={by => step(field.id, by)} />
                                    <NumberInput
                                        id={field.id}
                                        $focused={i === 0}
                                        value={values[field.id]}
                                        onChange={e => setValues({ ...values, [field.id]: e.target.value })}
                                    />
                                    {i === 0 && <Caret />}
                                </FormRow>
                            ))}
                        </Group>
                        <Group $after={12} $bottom={10}>
                            <legend>Table Direction</legend>
                            <FormRow $top={5} $label={103}>
                                <label htmlFor="direction">Direction:</label>
                                <Select id="direction" w={126} h={18} value="Left-to-Right" />
                            </FormRow>
                        </Group>
                        <FormRow $top={0} $label={92}>
                            <label htmlFor="tableStyle">Table Style:</label>
                            <Select id="tableStyle" w={155} h={18} light value="[Basic Table]" />
                        </FormRow>
                    </ModalMain>
                    <Actions>
                        <ModalButton $primary>OK</ModalButton>
                        <ModalButton type="button">Cancel</ModalButton>
                    </Actions>
                </ModalBody>
            </Modal>
        </Overlay>
    );
};

export default function App() {
    return (
        <Shell>
            <GlobalStyle />
            <TopMenu />
            <ControlStrip />
            <Workspace>
                <Tools />
                <Document />
                <Panels />
            </Workspace>
            <CreateTable />
        </Shell>
    );
}
